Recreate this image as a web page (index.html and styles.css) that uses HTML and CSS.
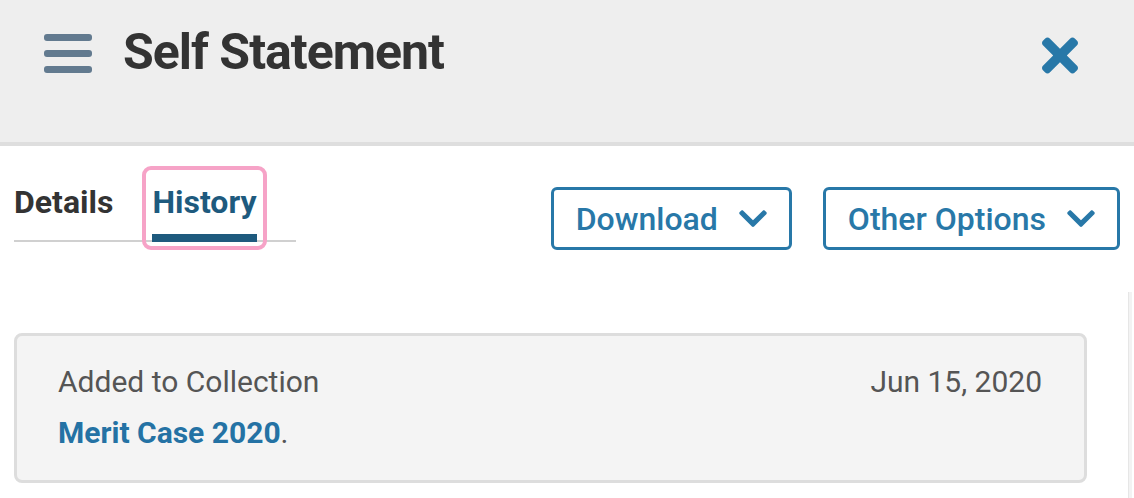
FILE: index.html
```html
<!DOCTYPE html>
<html lang="en">
<head>
<meta charset="utf-8">
<title>Self Statement</title>
<link rel="stylesheet" href="styles.css">
</head>
<body>
<header class="header">
  <button class="menu-btn" aria-label="Menu">
    <span class="bar"></span><span class="bar"></span><span class="bar"></span>
  </button>
  <h1 class="title">Self Statement</h1>
  <button class="close-btn" aria-label="Close">
    <svg class="close-icon" viewBox="0 80 352 352" aria-hidden="true"><path d="M242.72 256l100.07-100.07c12.28-12.28 12.28-32.19 0-44.48l-22.24-22.240c-12.28-12.28-32.19-12.28-44.48 0L176 189.28 75.93 89.21c-12.28-12.28-32.19-12.28-44.48 0L9.21 111.45c-12.28 12.28-12.28 32.19 0 44.48L109.28 256 9.21 356.07c-12.28 12.28-12.28 32.19 0 44.48l22.24 22.24c12.28 12.28 32.2 12.28 44.48 0L176 322.72l100.07 100.07c12.28 12.28 32.2 12.28 44.48 0l22.24-22.24c12.28-12.28 12.28-32.19 0-44.48L242.72 256z"/></svg>
  </button>
</header>
<div class="toolbar">
  <nav class="tabs">
    <a class="tab"><span class="tab-label">Details</span></a>
    <a class="tab active"><span class="tab-label">History</span></a>
  </nav>
  <div class="actions">
    <button class="btn btn-download">Download
      <svg class="chev" viewBox="5 120 438 270" aria-hidden="true"><path d="M207.029 381.476L12.686 187.132c-9.373-9.373-9.373-24.569 0-33.941l22.667-22.667c9.357-9.357 24.522-9.375 33.901-.04L224 284.505l154.745-154.021c9.379-9.335 24.544-9.317 33.901.04l22.667 22.667c9.373 9.373 9.373 24.569 0 33.941L240.971 381.476c-9.373 9.372-24.569 9.372-33.942 0z"/></svg>
    </button>
    <button class="btn btn-options">Other Options
      <svg class="chev" viewBox="5 120 438 270" aria-hidden="true"><path d="M207.029 381.476L12.686 187.132c-9.373-9.373-9.373-24.569 0-33.941l22.667-22.667c9.357-9.357 24.522-9.375 33.901-.04L224 284.505l154.745-154.021c9.379-9.335 24.544-9.317 33.901.04l22.667 22.667c9.373 9.373 9.373 24.569 0 33.941L240.971 381.476c-9.373 9.372-24.569 9.372-33.942 0z"/></svg>
    </button>
  </div>
</div>
<section class="pane">
  <div class="history">
    <div class="card">
      <div class="card-row">
        <span class="event">Added to Collection</span>
        <span class="date">Jun 15, 2020</span>
      </div>
      <p class="card-body"><a class="link">Merit Case 2020</a>.</p>
    </div>
  </div>
  <div class="scroll-track"></div>
</section>
</body>
</html>
```

FILE: styles.css
```css
* { box-sizing: border-box; }
html, body { margin: 0; padding: 0; background: #ffffff; }
body {
  font-family: Roboto, "Noto Sans", "Liberation Sans", sans-serif;
  color: #333333;
  width: 1134px;
  height: 498px;
  overflow: hidden;
}

.header {
  height: 146px;
  background: #eeeeee;
  border-bottom: 4px solid #dedede;
  display: flex;
  align-items: flex-start;
  padding: 0 56px 0 44px;
}
.menu-btn {
  margin: 34px 0 0 0;
  padding: 0;
  border: 0;
  background: none;
  display: flex;
  flex-direction: column;
  gap: 9px;
  width: 48px;
}
.bar {
  display: block;
  width: 48px;
  height: 7px;
  border-radius: 3px;
  background: #627a8f;
}
.title {
  margin: 21px 0 0 31px;
  font-size: 50px;
  line-height: 62px;
  font-weight: 700;
  color: #333333;
  flex: 1;
  letter-spacing: -1px;
}
.close-btn {
  margin-top: 37px;
  padding: 0;
  border: 0;
  background: none;
  width: 36px;
  height: 37px;
  display: flex;
}
.close-icon { width: 36px; height: 37px; fill: #2878a8; }

.toolbar {
  display: flex;
  justify-content: space-between;
  align-items: flex-start;
  padding: 24px 14px 0 14px;
}
.tabs {
  display: flex;
  align-items: flex-end;
  width: 282px;
  border-bottom: 2px solid #d0d0d0;
  gap: 27px;
}
.tab {
  display: block;
  padding: 12px 6px 4px;
  margin-bottom: -6px;
  border-radius: 5px;
  font-size: 32px;
  font-weight: 700;
  color: #333333;
  cursor: pointer;
}
.tab:first-child { padding-left: 0; }
.tab-label {
  display: block;
  line-height: 40px;
  padding-bottom: 12px;
  border-bottom: 8px solid transparent;
}
.tab.active {
  color: #1e5a7e;
  outline: 4px solid #f6a3c7;
}
.tab.active .tab-label { border-bottom-color: #1e5a7e; }

.actions {
  display: flex;
  gap: 31px;
  margin-top: 17px;
}
.btn {
  height: 63px;
  border: 3px solid #2878a8;
  border-radius: 6px;
  background: #ffffff;
  color: #2878a8;
  font-family: inherit;
  font-size: 32px;
  font-weight: 500;
  padding: 0 22px 0 22px;
  display: inline-flex;
  align-items: center;
  gap: 21px;
}
.chev { width: 28px; height: 17px; fill: #2878a8; }

.pane {
  display: flex;
  margin-top: 42px;
  height: 206px;
}
.history {
  flex: 1;
  padding: 41px 41px 0 14px;
}
.scroll-track {
  width: 4px;
  margin-right: 2px;
  background: #f3f3f3;
  border-left: 1px solid #e6e6e6;
}
.card {
  background: #f4f4f4;
  border: 3px solid #dddddd;
  border-radius: 8px;
  padding: 20px 42px 22px 41px;
  color: #555555;
  font-size: 30px;
}
.card-row {
  display: flex;
  justify-content: space-between;
  line-height: 51px;
}
.card-body {
  margin: 0;
  line-height: 51px;
}
.link {
  color: #2472a4;
  font-weight: 700;
  cursor: pointer;
}
```
